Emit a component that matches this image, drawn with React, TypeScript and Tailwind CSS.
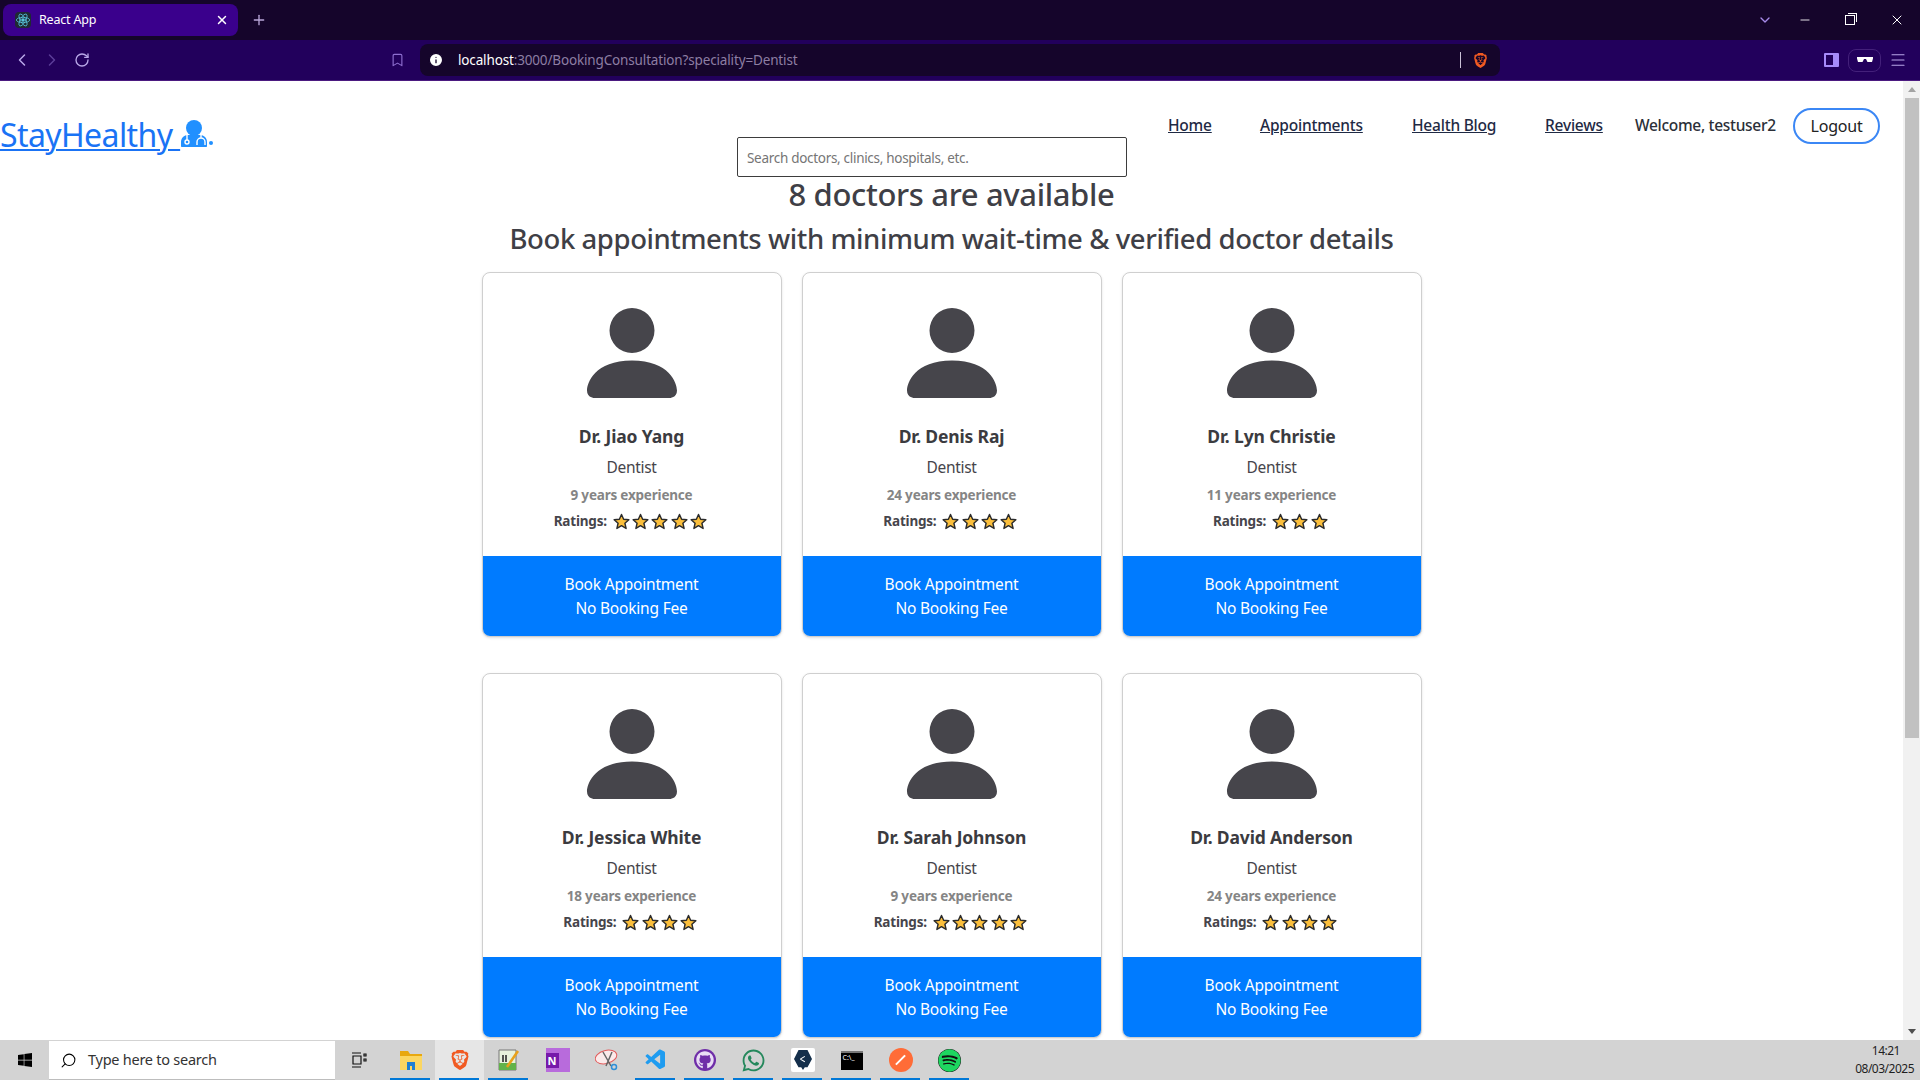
import { ChevronDown, ChevronLeft, ChevronRight, Plus, RotateCw, Search, X, Minus, Bookmark, Info, Menu } from "lucide-react";
import { FaWhatsapp, FaSpotify, FaGithub, FaWindows } from "react-icons/fa";
import { SiBrave } from "react-icons/si";
import { VscVscode } from "react-icons/vsc";

const doctors = [
  { name: "Dr. Jiao Yang", years: 9, stars: 5 },
  { name: "Dr. Denis Raj", years: 24, stars: 4 },
  { name: "Dr. Lyn Christie", years: 11, stars: 3 },
  { name: "Dr. Jessica White", years: 18, stars: 4 },
  { name: "Dr. Sarah Johnson", years: 9, stars: 5 },
  { name: "Dr. David Anderson", years: 24, stars: 4 },
];

const Star = () => (
  <svg viewBox="0 0 24 24" className="w-[17px] h-[17px] mr-[2.3px]">
    <path
      d="M12 2l3 6.9 7.4.7-5.6 4.9 1.7 7.3L12 17.9l-6.5 3.9 1.7-7.3L1.6 9.6 9 8.9z"
      fill="#fbbf3c"
      stroke="#2b2b2b"
      strokeWidth="2"
      strokeLinejoin="round"
    />
  </svg>
);

const Avatar = () => (
  <svg viewBox="0 0 16 16" className="w-[120px] h-[120px]" fill="#46454b">
    <path d="M3 14s-1 0-1-1 1-4 6-4 6 3 6 4-1 1-1 1H3Zm5-6a3 3 0 1 0 0-6 3 3 0 0 0 0 6Z" />
  </svg>
);

const DoctorCard = ({ name, years, stars }: { name: string; years: number; stars: number }) => (
  <div className="h-[365px] rounded-lg border border-[#cfcfcf] shadow-sm flex flex-col overflow-hidden bg-white">
    <div className="flex-1 flex flex-col items-center pt-5">
      <Avatar />
      <div className="mt-[11px] text-[17.5px] leading-6 font-bold tracking-[-0.15px] text-[#3b3b40]">{name}</div>
      <div className="mt-[7px] text-[15.5px] leading-6 tracking-[-0.3px] text-[#46454b]">Dentist</div>
      <div className="mt-[4px] text-[13.5px] leading-6 font-bold tracking-[-0.2px] text-[#858585]">{years} years experience</div>
      <div className="mt-[2px] flex items-center gap-[6px] text-[13.5px] leading-6 font-bold tracking-[-0.2px] text-[#46454b]">
        <span>Ratings:</span>
        <span className="flex items-center">
          {Array.from({ length: stars }).map((_, i) => (
            <Star key={i} />
          ))}
        </span>
      </div>
    </div>
    <div className="h-[80px] bg-[#007bff] text-white text-[15.5px] leading-6 tracking-[-0.2px] flex flex-col items-center justify-center">
      <span>Book Appointment</span>
      <span>No Booking Fee</span>
    </div>
  </div>
);

const DoctorLogo = () => (
  <svg viewBox="0 0 26 27" className="w-[26px] h-[27px] shrink-0 ml-[1px] -mt-[4px]" fill="#2190ff">
    <circle cx="13" cy="8" r="8" />
    <path d="M1 27c-.6 0-1-.4-1-1v-4c0-4 3-7 7-7h12c4 0 7 3 7 7v4c0 .6-.4 1-1 1z" />
    <circle cx="6" cy="22" r="2" fill="none" stroke="#fff" strokeWidth="1.400" />
    <path d="M6 20v-5M20 15v2.500M16 25v-3a4 4 0 0 1 8 0v3" fill="none" stroke="#fff" strokeWidth="1.400" />
  </svg>
);

const Navbar = () => (
  <header className="flex items-start h-[95px] shrink-0">
    <a className="mt-[32px] flex items-center text-[32px] leading-[44px] tracking-[-0.6px] text-[#1a73f5] w-[737px]" href="#">
      <span className="underline decoration-2 underline-offset-2 whitespace-pre">StayHealthy </span>
      <DoctorLogo />
      <span className="w-[4px] h-[4px] rounded-full bg-[#2190ff] ml-[2px] mt-[16px]" />
    </a>
    <div className="mt-[56px] w-[390px] h-[40px] border border-[#3d3d3d] rounded-[2px] flex items-center pl-[9px] pt-[2px] text-[13.5px] tracking-[-0.3px] text-[#757575]">
      Search doctors, clinics, hospitals, etc.
    </div>
    <nav className="ml-[41px] mt-[27px] h-[35px] flex items-center text-[#1f2a44] text-[15.5px] font-medium tracking-[-0.22px]">
      <a className="underline w-[92px]" href="#">Home</a>
      <a className="underline w-[152px]" href="#">Appointments</a>
      <a className="underline w-[133px]" href="#">Health Blog</a>
      <a className="underline w-[90px]" href="#">Reviews</a>
      <span className="w-[158px] text-[#2b2f38] tracking-[-0.3px]">Welcome, testuser2</span>
      <button className="w-[87px] h-[36px] rounded-full border-2 border-[#3b87f5] text-[16px] font-normal text-[#222]">Logout</button>
    </nav>
  </header>
);

const Scrollbar = () => (
  <div className="w-[17px] shrink-0 bg-[#f1f1f1] flex flex-col items-center">
    <div className="h-[17px] flex items-center justify-center">
      <div className="border-x-[4px] border-x-transparent border-b-[5px] border-b-[#a3a3a3]" />
    </div>
    <div className="w-[14px] h-[640px] bg-[#c1c1c1]" />
    <div className="flex-1" />
    <div className="h-[17px] flex items-center justify-center">
      <div className="border-x-[4px] border-x-transparent border-t-[5px] border-t-[#505050]" />
    </div>
  </div>
);

const TabStrip = () => (
  <div className="h-[40px] shrink-0 bg-[#15052b] flex items-center pl-[3px] text-white">
    <div className="w-[235px] h-[32px] rounded-lg bg-[#3a008c] flex items-center pl-[12px] pr-[9px]">
      <svg viewBox="0 0 24 24" className="w-4 h-4 bg-[#1f2a33] rounded-sm" fill="none" stroke="#58c4dc" strokeWidth="1.200">
        <circle cx="12" cy="12" r="2" fill="#58c4dc" />
        <ellipse cx="12" cy="12" rx="10" ry="4" />
        <ellipse cx="12" cy="12" rx="10" ry="4" transform="rotate(60 12 12)" />
        <ellipse cx="12" cy="12" rx="10" ry="4" transform="rotate(120 12 12)" />
      </svg>
      <span className="ml-[8px] text-[12.5px] tracking-[-0.2px]">React App</span>
      <X className="ml-auto w-[14px] h-[14px]" strokeWidth={2.500} />
    </div>
    <Plus className="ml-[13px] w-[16px] h-[16px] text-[#b9a7d9]" strokeWidth={2} />
    <ChevronDown className="ml-auto w-[16px] h-[16px] text-[#a78bea]" strokeWidth={2} />
    <Minus className="ml-[25px] w-[14px] h-[14px]" strokeWidth={1.500} />
    <div className="ml-[33px] relative w-[10px] h-[10px] border border-white">
      <div className="absolute -top-[3px] -right-[3px] w-[9px] h-[9px] border-t border-r border-white" />
    </div>
    <X className="ml-[34px] mr-[15px] w-[16px] h-[16px]" strokeWidth={1.500} />
  </div>
);

const Toolbar = () => (
  <div className="h-[41px] shrink-0 bg-[#22005c] border-b border-[#4b1a80] flex items-center">
    <ChevronLeft className="ml-[12px] w-[20px] h-[20px] text-[#b9a7e8]" strokeWidth={1.800} />
    <ChevronRight className="ml-[10px] w-[20px] h-[20px] text-[#5c3d99]" strokeWidth={1.800} />
    <RotateCw className="ml-[12px] w-[16px] h-[16px] text-[#b9a7e8]" strokeWidth={2} />
    <Bookmark className="ml-[300px] w-[15px] h-[16px] text-[#8e6fd0]" strokeWidth={1.800} />
    <div className="ml-[15px] w-[1080px] h-[32px] rounded-lg bg-[#15052b] flex items-center pl-[8px] pr-[12px]">
      <Info className="w-[16px] h-[16px] text-[#15052b]" fill="#fff" strokeWidth={2} />
      <span className="ml-[14px] text-[13.500px] tracking-[-0.15px] text-white">localhost</span>
      <span className="text-[13.500px] tracking-[-0.15px] text-[#8d7ea3]">:3000/BookingConsultation?speciality=Dentist</span>
      <div className="ml-auto w-px h-[16px] bg-[#c9c1d6]" />
      <SiBrave className="ml-[12px] w-[15px] h-[17px] text-[#f15a22]" />
    </div>
    <div className="ml-[324px] w-[15px] h-[14px] border-2 border-[#a78bfa] rounded-[1px] flex justify-end">
      <div className="w-[4px] bg-[#a78bfa]" />
    </div>
    <div className="ml-[9px] w-[33px] h-[23px] rounded-lg border border-[#43207a] flex items-center justify-center">
      <svg viewBox="0 0 16 6" className="w-[16px] h-[6px]" fill="#fff">
        <path d="M0 0h16v1.500l-1 3.500h-4.500L9 2H7L5.500 5H1L0 1.500z" />
      </svg>
    </div>
    <Menu className="ml-[8px] w-[18px] h-[18px] text-[#b9a7e8]" strokeWidth={1.500} />
  </div>
);

// taskbar slots, 49px apart
const Slot = ({ active, bright, children }: { active?: boolean; bright?: boolean; children: React.ReactNode }) => (
  <div className={`w-[49px] h-[40px] flex items-center justify-center relative ${bright ? "bg-[#e6e6e6]" : ""}`}>
    {children}
    {active && <div className="absolute bottom-0 left-[4px] right-[5px] h-[2px] bg-[#0078d7]" />}
  </div>
);

const Taskbar = () => (
  <div className="h-[40px] shrink-0 bg-[#d3d3d3] flex items-center text-black">
    <div className="w-[49px] flex justify-center">
      <FaWindows className="w-[16px] h-[16px]" />
    </div>
    <div className="w-[286px] h-[39px] mt-[1px] bg-white flex items-center pl-[11px] border-b border-[#bdbdbd]">
      <Search className="w-[17px] h-[17px] -scale-x-100" strokeWidth={1.500} />
      <span className="ml-[11px] text-[14.500px] tracking-[-0.25px] text-[#333]">Type here to search</span>
    </div>
    <div className="w-[51px] flex justify-center pr-[3px]">
      <svg viewBox="0 0 16 16" className="w-[16px] h-[16px]" fill="none" stroke="#111" strokeWidth="1.200">
        <path d="M1 1h9M1 15h9M2 4h8v8H2zM13 2h2v2h-2zM13 7h2v2h-2z" />
      </svg>
    </div>
    <Slot active>
      <svg viewBox="0 0 22 20" className="w-[22px] h-[20px]">
        <path d="M0 1h8l2 3h12v3H0z" fill="#e8a80f" />
        <path d="M0 6h22v14H0z" fill="#fbd661" />
        <path d="M7 20v-8h8v8h-3v-4h-2v4z" fill="#1f7fd1" />
      </svg>
    </Slot>
    <Slot active bright>
      <SiBrave className="w-[20px] h-[24px] text-[#f15a22]" />
    </Slot>
    <Slot active>
      <svg viewBox="0 0 22 24" className="w-[22px] h-[24px]">
        <path d="M1 2h17v20H1z" fill="#e8f3dc" stroke="#777" />
        <path d="M1 15h17v7H1z" fill="#62b34a" />
        <path d="M5 7v7M8 7v7" stroke="#222" strokeWidth="1.500" />
        <path d="M9 19L20 3" stroke="#e9a21a" strokeWidth="2.500" />
      </svg>
    </Slot>
    <Slot>
      <div className="w-[24px] h-[24px] bg-[#b86bdc] relative flex items-center">
        <div className="w-[13px] h-[15px] bg-[#7719aa] text-white text-[11px] font-bold leading-[15px] text-center">N</div>
      </div>
    </Slot>
    <Slot>
      <svg viewBox="0 0 24 24" className="w-[24px] h-[24px]" fill="none">
        <ellipse cx="11" cy="9" rx="11" ry="6.500" fill="#fbeaea" stroke="#e25b5b" transform="rotate(-15 11 9)" />
        <path d="M8 4l8 14M17 4l-6 14" stroke="#666" strokeWidth="1.500" />
        <circle cx="19" cy="19" r="2.500" stroke="#2f8fd8" strokeWidth="1.500" />
      </svg>
    </Slot>
    <Slot active>
      <VscVscode className="w-[24px] h-[24px] text-[#1f9cf0]" />
    </Slot>
    <Slot active>
      <div className="w-[22px] h-[22px] rounded-full bg-[#6f2da8] flex items-center justify-center">
        <FaGithub className="w-[18px] h-[18px] text-[#e9dcf5]" />
      </div>
    </Slot>
    <Slot active>
      <FaWhatsapp className="w-[25px] h-[25px] text-[#25885c]" />
    </Slot>
    <Slot active>
      <div className="w-[24px] h-[24px] rounded-[2px] bg-white flex items-center justify-center">
        <svg viewBox="0 0 20 22" className="w-[18px] h-[20px]" fill="#142f4b">
          <path d="M5 0h10l5 10-5 9h-3l-2 3-2-3H5L0 10z" />
          <path d="M7 10l5-3M7 10l5 3" stroke="#fff" strokeWidth="1.200" />
        </svg>
      </div>
    </Slot>
    <Slot active>
      <div className="w-[22px] h-[19px] bg-black border-t-2 border-[#777] text-white text-[7px] leading-[9px] pl-[2px]">C:\_</div>
    </Slot>
    <Slot active>
      <div className="w-[24px] h-[24px] rounded-full bg-[#ff6c37] flex items-center justify-center">
        <div className="w-[13px] h-[2px] bg-white -rotate-45" />
      </div>
    </Slot>
    <Slot active>
      <FaSpotify className="w-[23px] h-[23px] text-[#1ed760] bg-[#111] rounded-full" />
    </Slot>
    <div className="ml-auto pr-[6px] flex flex-col items-end text-[12px] leading-[18px] tracking-[-0.5px] text-[#1f1f1f]">
      <span className="pr-[14px]">14:21</span>
      <span>08/03/2025</span>
    </div>
  </div>
);

export default function App() {
  return (
    <div className="h-screen w-screen overflow-hidden flex flex-col bg-white font-['Noto_Sans',sans-serif]">
      <TabStrip />
      <Toolbar />
      <div className="flex-1 min-h-0 flex">
        <main className="flex-1 min-w-0 overflow-hidden">
          <Navbar />
          <h2 className="-mt-[1px] text-center text-[31px] leading-[38px] font-medium tracking-[-0.35px] text-[#3f3f46]">8 doctors are available</h2>
          <h3 className="mt-[7px] text-center text-[27.5px] leading-[38px] font-medium tracking-[-0.42px] text-[#3f3f46]">
            Book appointments with minimum wait-time &amp; verified doctor details
          </h3>
          <div className="mt-[14px] w-[940px] mx-auto grid grid-cols-3 gap-x-5 gap-y-[36px]">
            {doctors.map((d) => (
              <DoctorCard key={d.name} {...d} />
            ))}
          </div>
        </main>
        <Scrollbar />
      </div>
      <Taskbar />
    </div>
  );
}
